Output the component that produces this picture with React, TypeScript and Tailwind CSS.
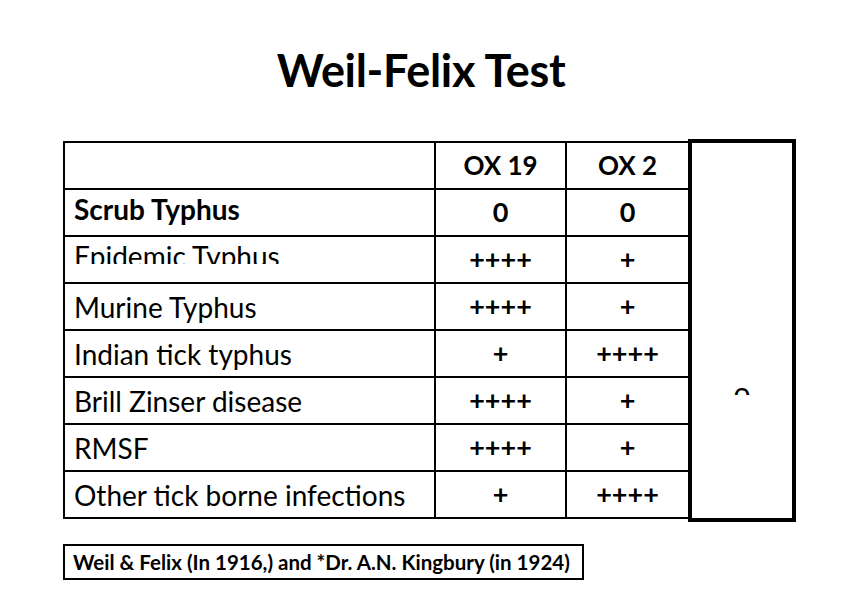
const rows = [
  { name: "Scrub Typhus", a: "0", b: "0", bold: true },
  { name: "Epidemic Typhus", a: "++++", b: "+", clipped: true },
  { name: "Murine Typhus", a: "++++", b: "+" },
  { name: "Indian tick typhus", a: "+", b: "++++" },
  { name: "Brill Zinser disease", a: "++++", b: "+" },
  { name: "RMSF", a: "++++", b: "+" },
  { name: "Other tick borne infections", a: "+", b: "++++" },
];

export default function App() {
  return (
    <div
      className="w-[842px] h-[596px] bg-white text-black overflow-hidden"
      style={{ fontFamily: "Lato, 'Open Sans', sans-serif" }}
    >
      <h1 className="pt-[43px] h-[142px] text-center text-[45px] font-bold leading-[54px] tracking-[-0.3px]">
        Weil-Felix Test
      </h1>

      <div className="flex items-center ml-[63px] h-[376px]">
        <table className="border-collapse border-2 border-black">
          <tbody>
            <tr className="h-[47px]">
              <td className="w-[371px] border-2 border-black" />
              <td className="w-[131px] border-2 border-black text-center text-[26px] font-bold">OX 19</td>
              <td className="w-[123px] border-2 border-black text-center text-[26px] font-bold">OX 2</td>
            </tr>
            {rows.map((r) =>
              <tr key={r.name} className="h-[47px]">
                {r.clipped ? (
                  <td className="border-2 border-black px-[9px] text-[28px] align-top">
                    <div className="mt-[5px] h-[22px] overflow-hidden leading-[28px] whitespace-nowrap">{r.name}</div>
                  </td>
                ) : (
                  <td className="border-2 border-black px-[9px] text-[28px] whitespace-nowrap">
                    <span className={r.bold ? "font-bold relative top-[-4px]" : ""}>{r.name}</span>
                  </td>
                )}
                <td className="border-2 border-black text-center text-[27px] font-bold">{r.a}</td>
                <td className="border-2 border-black text-center text-[27px] font-bold">{r.b}</td>
              </tr>
            )}
          </tbody>
        </table>
        <div className="-ml-[2px] w-[108px] h-[383px] border-[4px] border-black flex flex-col items-center">
          <div className="mt-[245px] h-[7px] overflow-hidden text-[30px] leading-[30px]">
            <span className="relative top-[-11px]">o</span>
          </div>
        </div>
      </div>

      <div className="ml-[63px] mt-[26px] w-[521px] h-[36px] border-2 border-black px-[8px] flex items-center text-[20.5px] font-bold whitespace-nowrap">
        Weil &amp; Felix (In 1916,) and *Dr. A.N. Kingbury (in 1924)
      </div>
    </div>
  );
}
